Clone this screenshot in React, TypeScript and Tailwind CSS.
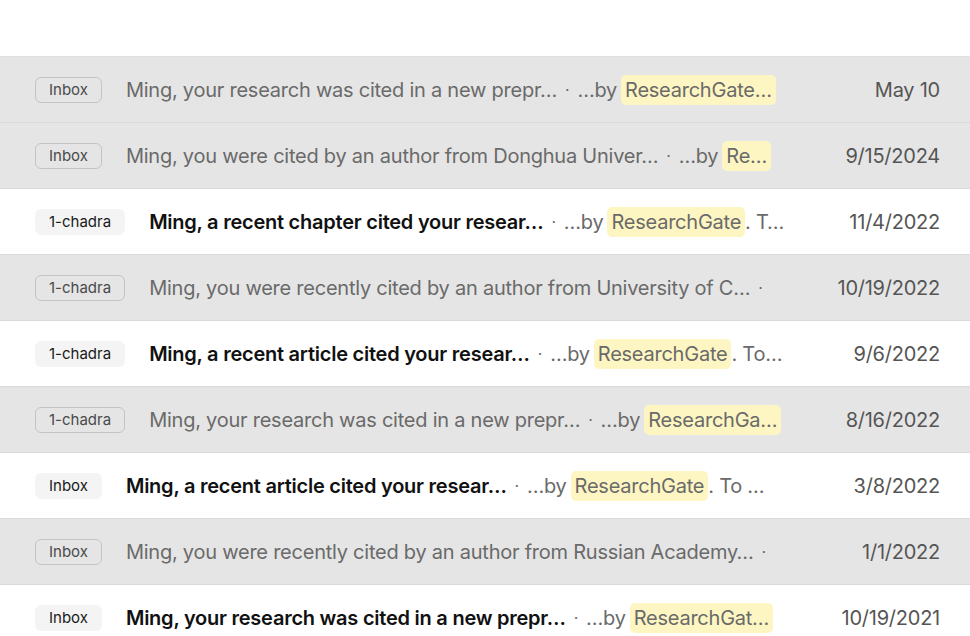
import React from "react";

type Row = {
  label: string;
  subject: string;
  snippet?: { pre?: string; mark?: string; post?: string };
  date: string;
  unread: boolean;
};

const rows: Row[] = [
  { label: "Inbox", subject: "Ming, your research was cited in a new prepr…", snippet: { pre: "…by", mark: "ResearchGate…" }, date: "May 10", unread: false },
  { label: "Inbox", subject: "Ming, you were cited by an author from Donghua Univer…", snippet: { pre: "…by", mark: "Re…" }, date: "9/15/2024", unread: false },
  { label: "1-chadra", subject: "Ming, a recent chapter cited your resear…", snippet: { pre: "…by", mark: "ResearchGate", post: ". T…" }, date: "11/4/2022", unread: true },
  { label: "1-chadra", subject: "Ming, you were recently cited by an author from University of C…", date: "10/19/2022", unread: false },
  { label: "1-chadra", subject: "Ming, a recent article cited your resear…", snippet: { pre: "…by", mark: "ResearchGate", post: ". To…" }, date: "9/6/2022", unread: true },
  { label: "1-chadra", subject: "Ming, your research was cited in a new prepr…", snippet: { pre: "…by", mark: "ResearchGa…" }, date: "8/16/2022", unread: false },
  { label: "Inbox", subject: "Ming, a recent article cited your resear…", snippet: { pre: "…by", mark: "ResearchGate", post: ". To …" }, date: "3/8/2022", unread: true },
  { label: "Inbox", subject: "Ming, you were recently cited by an author from Russian Academy…", date: "1/1/2022", unread: false },
  { label: "Inbox", subject: "Ming, your research was cited in a new prepr…", snippet: { pre: "…by", mark: "ResearchGat…" }, date: "10/19/2021", unread: true },
];

function Label({ text, unread }: { text: string; unread: boolean }) {
  return (
    <span
      className={
        "shrink-0 rounded-md px-[13px] h-[26px] flex items-center text-[15px] leading-none tracking-normal " +
        (unread
          ? "bg-[#f4f4f4] text-[#1a1a1a] border border-transparent"
          : "border border-[#c4c4c4] text-[#4a4a4a]")
      }
    >
      {text}
    </span>
  );
}

function MailRow({ row }: { row: Row }) {
  return (
    <div
      className={
        "h-[66px] flex items-center border-b border-[#d9d9d9] pl-[35px] pr-[30px] tracking-[-0.015em] " +
        (row.unread ? "bg-white" : "bg-[#e5e5e5]")
      }
    >
      <Label text={row.label} unread={row.unread} />
      <div className="flex items-center min-w-0 w-[648px] ml-[24px] whitespace-nowrap text-[20px]">
        <span
          className={
            row.unread ? "text-[#111111] font-semibold" : "text-[#6a6a6a]"
          }
        >
          {row.subject}
        </span>
        <span className="text-[#6a6a6a] mx-[8px] text-[16px]">·</span>
        {row.snippet && (
          <span className="text-[#6a6a6a] flex items-center">
            <span>{row.snippet.pre}</span>
            <span className="ml-[4px] bg-[#fef6c2] rounded-[5px] px-[4px]">{row.snippet.mark}</span>
            {row.snippet.post && <span>{row.snippet.post}</span>}
          </span>
        )}
      </div>
      <div className="ml-auto text-[20px] text-[#555555] whitespace-nowrap">{row.date}</div>
    </div>
  );
}

export default function App() {
  return (
    <div
      className="w-[970px] h-[636px] overflow-hidden bg-white"
      style={{ fontFamily: "Inter, 'Noto Sans', sans-serif" }}
    >
      <div className="h-[57px] border-b border-[#e0e0e0]" />
      {rows.map((r, i) => (
        <MailRow key={i} row={r} />
      ))}
    </div>
  );
}
